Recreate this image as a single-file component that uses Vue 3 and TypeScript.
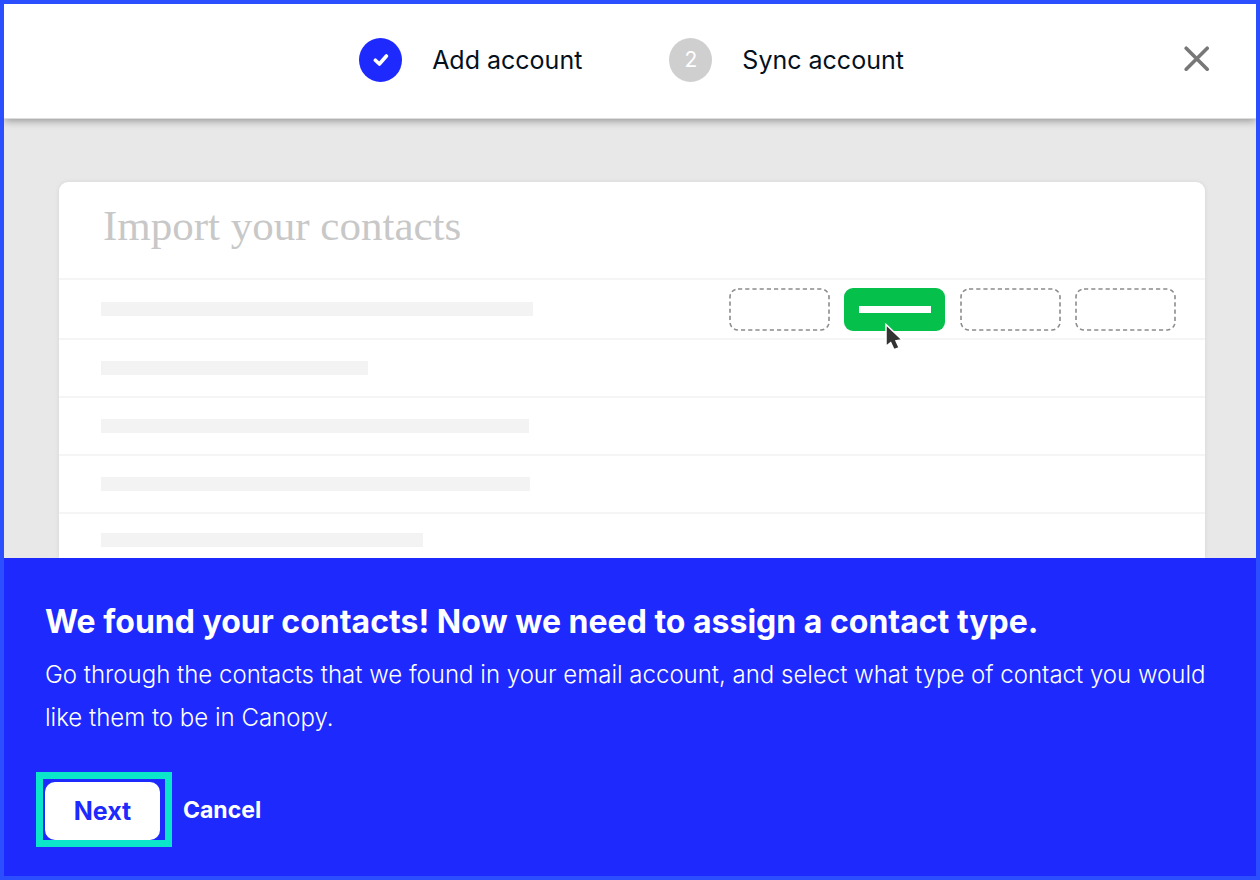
<script setup lang="ts">
interface Slot {
  id: number
  selected: boolean
}

interface ContactRow {
  id: number
  width: number
  slots: Slot[]
}

const rows: ContactRow[] = [
  {
    id: 1,
    width: 432,
    slots: [
      { id: 1, selected: false },
      { id: 2, selected: true },
      { id: 3, selected: false },
      { id: 4, selected: false },
    ],
  },
  { id: 2, width: 267, slots: [] },
  { id: 3, width: 428, slots: [] },
  { id: 4, width: 429, slots: [] },
  { id: 5, width: 322, slots: [] },
]
</script>

<template>
  <div class="dialog">
    <header class="topbar">
      <ol class="steps">
        <li class="step">
          <span class="badge done">
            <svg width="16" height="14" viewBox="0 0 16 14" aria-hidden="true">
              <path d="M2.4 7.2 6.4 11 13.4 3" />
            </svg>
          </span>
          <span>Add account</span>
        </li>
        <li class="step">
          <span class="badge">2</span>
          <span>Sync account</span>
        </li>
      </ol>
      <button class="close" type="button" aria-label="Close">
        <svg width="26" height="26" viewBox="0 0 26 26" aria-hidden="true">
          <path d="M2.2 2.2 23.2 23.2M23.2 2.2 2.2 23.2" />
        </svg>
      </button>
    </header>

    <main class="stage">
      <section class="card">
        <h1>Import your contacts</h1>
        <ul class="rows">
          <li v-for="row in rows" :key="row.id" class="row">
            <span class="bar" :style="{ width: row.width + 'px' }"></span>
            <div v-if="row.slots.length" class="slots">
              <span v-for="slot in row.slots" :key="slot.id" class="slot" :class="{ selected: slot.selected }">
                <template v-if="slot.selected">
                  <span class="line"></span>
                  <svg class="cursor" width="20" height="30" viewBox="0 0 20 30" aria-hidden="true">
                    <path d="M2 1.5V23.4L6.7 19.6 10 26.8 15.2 24.6 12 17.8 18 16.8Z" />
                  </svg>
                </template>
                <svg v-else class="dashes" width="101" height="43" aria-hidden="true">
                  <rect x="1" y="1" width="99" height="41" rx="8" />
                </svg>
              </span>
            </div>
          </li>
        </ul>
      </section>
    </main>

    <footer class="panel">
      <h2>We found your contacts! Now we need to assign a contact type.</h2>
      <p>
        Go through the contacts that we found in your email account, and select what type of contact you would
        like them to be in Canopy.
      </p>
      <div class="actions">
        <div class="highlight">
          <button class="next" type="button">Next</button>
        </div>
        <button class="cancel" type="button">Cancel</button>
      </div>
    </footer>
  </div>
</template>

<style>
body {
  margin: 0;
}
</style>

<style scoped>
.dialog {
  box-sizing: border-box;
  min-height: 100vh;
  display: flex;
  flex-direction: column;
  border: 4px solid #2b4eff;
  background: #1d29fd;
  font-family: Inter, "Liberation Sans", sans-serif;
}

.topbar {
  position: relative;
  z-index: 1;
  box-sizing: border-box;
  height: 115px;
  padding: 0 46px 2px 49px;
  display: grid;
  grid-template-columns: 1fr auto 1fr;
  align-items: center;
  background: #fff;
  border-bottom: 1px solid #ddd;
  box-shadow: 0 2px 8px rgba(0, 0, 0, 0.36);
  clip-path: inset(0 0 -16px 0);
}

.steps {
  grid-column: 2;
  display: flex;
  gap: 87px;
  margin: 0;
  padding: 0;
  list-style: none;
}

.step {
  display: flex;
  align-items: center;
  gap: 30px;
  font-size: 25px;
  line-height: 44px;
  color: #04111d;
}

.badge {
  display: flex;
  align-items: center;
  justify-content: center;
  width: 43px;
  height: 44px;
  border-radius: 50%;
  background: #cfcfcf;
  color: #fff;
  font-size: 21px;
}

.done {
  background: #1d29fd;
}

.done path {
  fill: none;
  stroke: #fff;
  stroke-width: 3.6;
  stroke-linecap: round;
  stroke-linejoin: round;
}

button {
  margin: 0;
  border: 0;
  font-family: inherit;
  cursor: pointer;
}

.close {
  grid-column: 3;
  justify-self: end;
  display: flex;
  padding: 0 0 2px;
  background: none;
}

.close path {
  fill: none;
  stroke: #777;
  stroke-width: 3.6;
  stroke-linecap: round;
}

.stage {
  padding: 63px 51px 0 55px;
  background: #e8e8e8;
  overflow: hidden;
}

.card {
  border-radius: 9px 9px 0 0;
  background: #fff;
  box-shadow: 0 0 5px rgba(0, 0, 0, 0.08);
}

h1 {
  margin: 0;
  padding: 0 44px;
  font-family: "Liberation Serif", serif;
  font-size: 43px;
  line-height: 88px;
  height: 96px;
  font-weight: 400;
  color: #c8c8c8;
}

.rows {
  margin: 0;
  padding: 0;
  list-style: none;
}

.row {
  box-sizing: border-box;
  display: flex;
  align-items: center;
  justify-content: space-between;
  height: 58px;
  padding: 0 29px 0 42px;
  border-top: 2px solid #f5f5f5;
}

.row:first-child {
  height: 60px;
}

.row:last-child {
  height: 46px;
  align-items: flex-start;
  padding-top: 19px;
}

.bar {
  height: 14px;
  background: #f3f3f3;
}

.slots {
  display: flex;
  justify-content: space-between;
  width: 447px;
}

.slot {
  position: relative;
  display: flex;
  align-items: center;
  justify-content: center;
  width: 101px;
  height: 43px;
  border-radius: 9px;
}

.selected {
  background: #05c04b;
}

.line {
  width: 72px;
  height: 7px;
  background: #fff;
}

.dashes rect {
  fill: none;
  stroke: #8c8c8c;
  stroke-width: 1.6;
  stroke-dasharray: 4.2 3;
}

.cursor {
  position: absolute;
  left: 40px;
  top: 35px;
}

.cursor path {
  fill: #333;
  stroke: #fff;
  stroke-width: 1.5;
}

.panel {
  flex: 1;
  padding: 39px 40px 29px 41px;
  color: #fff;
}

h2 {
  margin: 0;
  font-size: 32px;
  line-height: 50px;
  font-weight: 700;
}

p {
  margin: 6px 0 33px;
  font-size: 24px;
  line-height: 43px;
  font-weight: 300;
}

.actions {
  display: flex;
  align-items: center;
  gap: 11px;
  margin-left: -9px;
}

.highlight {
  padding: 3px 5px 0 2px;
  border: 7px solid #0be5c9;
}

.next {
  display: block;
  width: 115px;
  height: 58px;
  border-radius: 10px;
  background: #fff;
  color: #1d29fd;
  font-size: 25px;
  font-weight: 700;
}

.cancel {
  padding: 0;
  background: none;
  color: #fff;
  font-size: 23px;
  font-weight: 700;
}
</style>
